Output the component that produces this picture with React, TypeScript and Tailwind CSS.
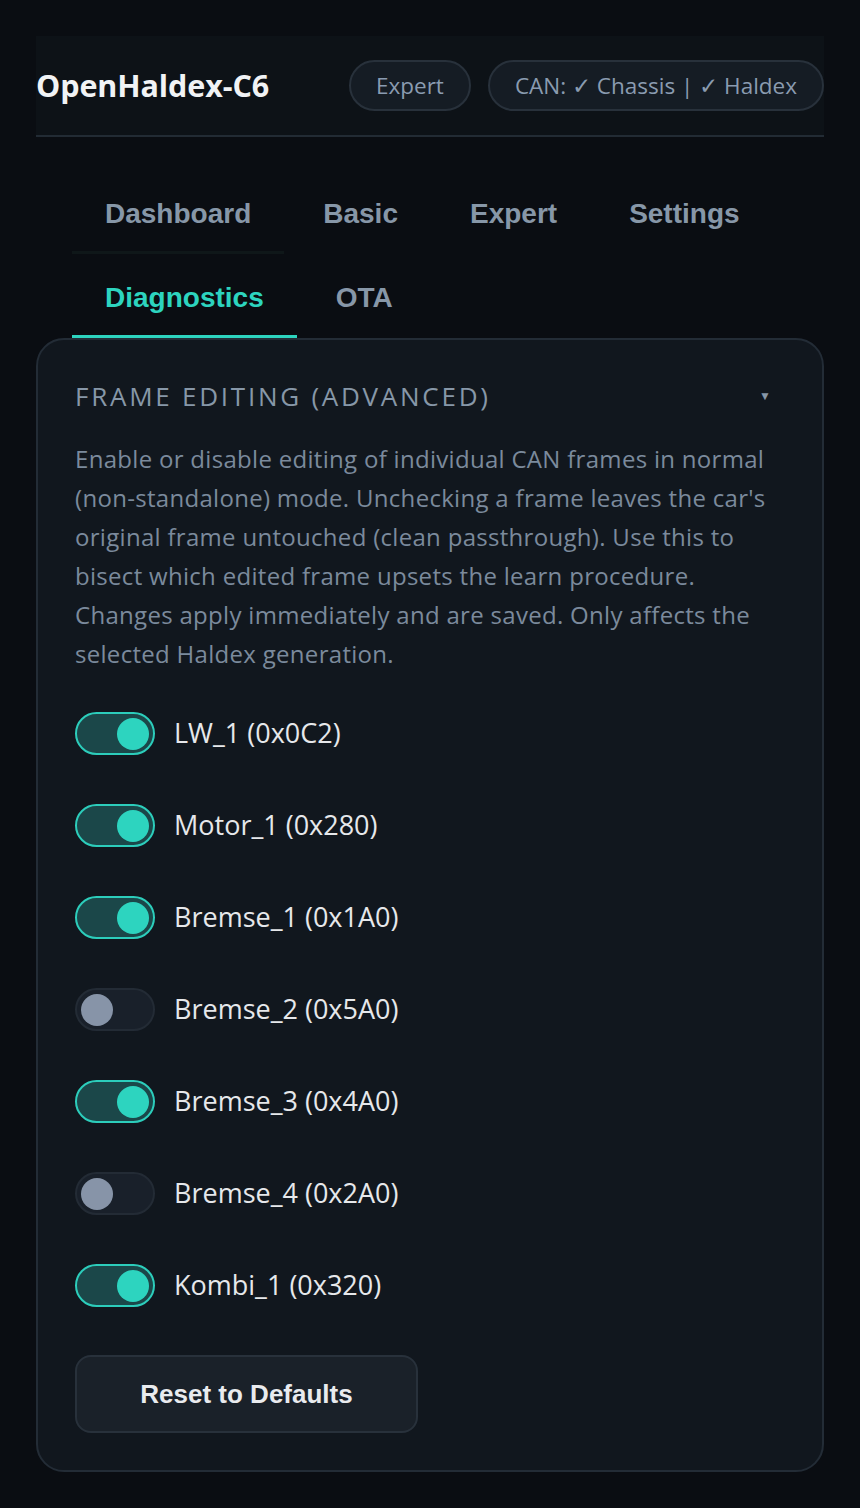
import { useState } from "react";

const frames = [
  { name: "LW_1 (0x0C2)", on: true },
  { name: "Motor_1 (0x280)", on: true },
  { name: "Bremse_1 (0x1A0)", on: true },
  { name: "Bremse_2 (0x5A0)", on: false },
  { name: "Bremse_3 (0x4A0)", on: true },
  { name: "Bremse_4 (0x2A0)", on: false },
  { name: "Kombi_1 (0x320)", on: true },
];

const tabs = ["Dashboard", "Basic", "Expert", "Settings", "Diagnostics", "OTA"];

function Toggle({ on, onClick }: { on: boolean; onClick: () => void }) {
  return (
    <button
      type="button"
      onClick={onClick}
      className={`flex h-[43px] w-[80px] shrink-0 items-center rounded-full border-2 px-[4px] ${
        on
          ? "justify-end border-[#2ccdbb] bg-[#1b4749]"
          : "justify-start border-[#232b35] bg-[#19202a]"
      }`}
    >
      <span
        className={`block h-[32px] w-[32px] rounded-full ${
          on ? "bg-[#2dd4bf]" : "bg-[#8794a8]"
        }`}
      />
    </button>
  );
}

export default function App() {
  const [state, setState] = useState(frames.map((f) => f.on));

  return (
    <div className="min-h-screen bg-[#0a0d12] px-9 pt-9 pb-9 font-['Open_Sans',sans-serif]">
      {/* Header */}
      <header className="flex h-[101px] items-center justify-between border-b-2 border-[#222b34] bg-[#0d1217]">
        <h1 className="text-[30.5px] font-bold tracking-[-0.1px] text-[#f1f3f5]">
          OpenHaldex-C6
        </h1>
        <div className="flex items-center gap-[17px]">
          <span className="flex h-[51px] items-center rounded-full border-2 border-[#28313b] bg-[#151c24] px-[25px] text-[22.5px] text-[#8a9bb0]">
            Expert
          </span>
          <span className="flex h-[51px] items-center rounded-full border-2 border-[#28313b] bg-[#151c24] px-[25px] text-[22.5px] text-[#8a9bb0]">
            CAN: ✓ Chassis | ✓ Haldex
          </span>
        </div>
      </header>

      {/* Tabs */}
      <nav className="mt-[33px] flex flex-wrap gap-x-[6px] px-9 font-['Liberation_Sans',Arial,sans-serif]">
        {tabs.map((t) => {
          const active = t === "Diagnostics";
          return (
            <button
              key={t}
              type="button"
              className={`border-b-[3px] px-[33px] pt-[28px] pb-[21px] text-[28px] leading-[32px] font-bold ${
                active
                  ? "border-[#2dd4bf] text-[#2dd4bf]"
                  : t === "Dashboard"
                    ? "border-[#0f1719] text-[#8797a8]"
                    : "border-transparent text-[#8797a8]"
              }`}
            >
              {t}
            </button>
          );
        })}
      </nav>

      {/* Card */}
      <section className="rounded-[28px] border-2 border-[#232c36] bg-[#11171e] px-[37px] pt-[40px] pb-[37px]">
        <div className="flex items-center justify-between">
          <h2 className="text-[26px] leading-[32px] tracking-[2.75px] text-[#8797a8] uppercase">
            Frame Editing (Advanced)
          </h2>
          <span className="mr-[14px] text-[12px] text-[#8797a8]">▼</span>
        </div>
        <p className="mt-[27px] text-[24px] leading-[39px] tracking-[0.3px] text-[#7b8a9c]">
          Enable or disable editing of individual CAN frames in normal
          (non-standalone) mode. Unchecking a frame leaves the car's original
          frame untouched (clean passthrough). Use this to bisect which edited
          frame upsets the learn procedure. Changes apply immediately and are
          saved. Only affects the selected Haldex generation.
        </p>

        <div className="mt-[39px] flex flex-col gap-[49px]">
          {frames.map((f, i) => (
            <label key={f.name} className="flex items-center gap-[19px]">
              <Toggle
                on={state[i]}
                onClick={() =>
                  setState((s) => s.map((v, j) => (j === i ? !v : v)))
                }
              />
              <span className="text-[27px] text-[#e6e8eb]">{f.name}</span>
            </label>
          ))}
        </div>

        <button
          type="button"
          className="mt-[48px] h-[78px] w-[343px] rounded-[16px] border-2 border-[#28313b] bg-[#1a2129] font-['Liberation_Sans',Arial,sans-serif] text-[26px] font-bold text-[#e9ebee]"
        >
          Reset to Defaults
        </button>
      </section>
    </div>
  );
}
